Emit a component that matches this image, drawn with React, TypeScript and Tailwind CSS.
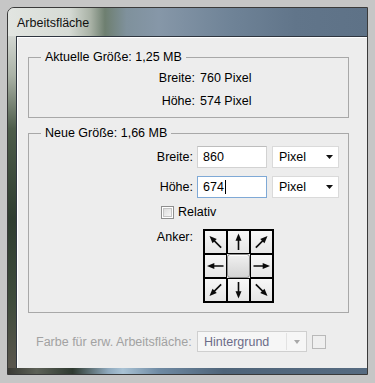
import React from "react";

function Arrow({ angle }: { angle: number }) {
  return (
    <svg width="21" height="22" viewBox="0 0 21 22" className="block">
      <g transform={`rotate(${angle} 10.5 11)`}>
        <line x1="10.5" y1="19" x2="10.5" y2="8" stroke="#0a0a0a" strokeWidth="1.6" />
        <polygon points="10.5,2.5 7.5,9.8 13.5,9.8" fill="#0a0a0a" />
      </g>
    </svg>
  );
}

function Cell({ angle }: { angle?: number }) {
  if (angle === undefined)
    return (
      <div className="w-[23px] h-[24px] rounded-[3px] border border-[#8a8a8a] bg-[linear-gradient(180deg,#f0f0f0,#d4d4d4)] shadow-[inset_0_1px_0_#ffffff]" />
    );
  return (
    <div className="w-[23px] h-[24px] border border-black bg-[linear-gradient(180deg,#f7f7f7,#e6e6e6)] flex items-center justify-center">
      <Arrow angle={angle} />
    </div>
  );
}

function Select({ label }: { label: string }) {
  return (
    <div className="w-[67px] h-[22px] bg-white border border-[#dadada] flex items-center justify-between pl-[6px] pr-[5px]">
      <span>{label}</span>
      <svg width="7" height="4" viewBox="0 0 7 4" className="block">
        <polygon points="0,0 7,0 3.5,4" fill="#111" />
      </svg>
    </div>
  );
}

export default function App() {
  return (
    <div className="w-[375px] h-[383px] bg-[#c6c6c6] pt-[7px] pl-[7px] pr-[7px] pb-[8px] font-['Liberation_Sans',Arial,sans-serif] text-[12.5px] leading-[14px] text-black overflow-hidden">
      <div className="h-full flex flex-col rounded-tl-[7px] border border-[#3a3a3a] overflow-hidden">
        {/* title bar */}
        <div className="h-[28px] shrink-0 flex items-center pl-[9px] pt-[2px] bg-[linear-gradient(90deg,#e2e5e1_0%,#d6dbd5_17%,#a9b2a6_23%,#6e7f70_27%,#7f919c_33%,#8697a8_42%,#6f8397_62%,#61758a_80%,#5e7287_100%)]">
          <span className="text-[#111]">Arbeitsfläche</span>
        </div>
        {/* body */}
        <div className="flex-1 flex min-h-0">
          <div className="w-[8px] shrink-0 bg-[linear-gradient(180deg,#d3d7d2_0%,#aab2a6_12%,#4d5c4a_28%,#2f3d30_55%,#3f4c3c_80%,#5a564d_100%)]" />
          <div className="flex-1 flex flex-col bg-[#ededed] border-l border-t border-[#2f3640] shadow-[inset_1px_1px_0_#ffffff]">
            {/* fieldset 1 */}
            <fieldset className="ml-[11px] mt-[13px] w-[321px] border border-[#a8a8a8] pt-[2px] pb-[5px]">
              <legend className="ml-[12px] px-[4px] leading-[14px]">Aktuelle Größe: 1,25 MB</legend>
              <div className="flex items-center h-[23px]">
                <span className="w-[166px] text-right">Breite:</span>
                <span className="ml-[5px]">760 Pixel</span>
              </div>
              <div className="flex items-center h-[23px]">
                <span className="w-[166px] text-right">Höhe:</span>
                <span className="ml-[5px]">574 Pixel</span>
              </div>
            </fieldset>
            {/* fieldset 2 */}
            <fieldset className="ml-[11px] mt-[8px] w-[321px] border border-[#a8a8a8] pt-[6px] pb-[9px]">
              <legend className="ml-[12px] px-[4px] leading-[14px]">Neue Größe: 1,66 MB</legend>
              <div className="flex items-center h-[22px]">
                <span className="w-[164px] text-right">Breite:</span>
                <div className="ml-[4px] w-[70px] h-[22px] bg-white border border-[#d2d2d2] border-t-[#bdbdbd] flex items-center pl-[5px]">
                  860
                </div>
                <div className="ml-[5px]">
                  <Select label="Pixel" />
                </div>
              </div>
              <div className="flex items-center h-[22px] mt-[8px]">
                <span className="w-[164px] text-right">Höhe:</span>
                <div className="ml-[4px] w-[70px] h-[22px] bg-white border border-[#7fa9d6] flex items-center pl-[5px]">
                  674
                  <span className="ml-[1px] w-[1px] h-[14px] bg-black" />
                </div>
                <div className="ml-[5px]">
                  <Select label="Pixel" />
                </div>
              </div>
              <div className="flex items-center h-[14px] mt-[7px] pl-[132px]">
                <div className="w-[13px] h-[13px] border border-[#8e8e8e] bg-white p-[1px]">
                  <div className="w-full h-full bg-[linear-gradient(135deg,#dcdcdc,#f6f6f6)] border border-[#c4c4c4]" />
                </div>
                <span className="ml-[4px]">Relativ</span>
              </div>
              <div className="flex items-start mt-[10px]">
                <span className="w-[164px] text-right mt-[1px]">Anker:</span>
                <div className="ml-[10px] grid grid-cols-[repeat(3,23px)] border border-black">
                  <Cell angle={-45} />
                  <Cell angle={0} />
                  <Cell angle={45} />
                  <Cell angle={-90} />
                  <Cell />
                  <Cell angle={90} />
                  <Cell angle={-135} />
                  <Cell angle={180} />
                  <Cell angle={135} />
                </div>
              </div>
            </fieldset>
            {/* bottom row */}
            <div className="flex items-center mt-[18px] pl-[19px]">
              <span className="w-[161px] text-[#a2a2a2] whitespace-nowrap">Farbe für erw. Arbeitsfläche:</span>
              <div className="w-[110px] h-[21px] bg-[#f6f6f6] border border-[#cfcfcf] flex items-center">
                <span className="flex-1 pl-[6px] text-[#6c6c88]">Hintergrund</span>
                <div className="w-[1px] h-[17px] bg-[#e2e2e2]" />
                <div className="w-[19px] flex justify-center">
                  <svg width="6" height="4" viewBox="0 0 6 4" className="block">
                    <polygon points="0,0 6,0 3,4" fill="#a8a8a8" />
                  </svg>
                </div>
              </div>
              <div className="ml-[5px] w-[14px] h-[14px] border border-[#b9b9b9] bg-[#efefef]" />
            </div>
          </div>
        </div>
        {/* bottom frame */}
        <div className="h-[6px] shrink-0 bg-[linear-gradient(90deg,#3a3a34_0%,#5d6157_8%,#2f3a30_18%,#8fa9bd_28%,#a9c2d4_32%,#6f8aa3_42%,#4f6479_60%,#566b81_100%)]" />
      </div>
    </div>
  );
}
